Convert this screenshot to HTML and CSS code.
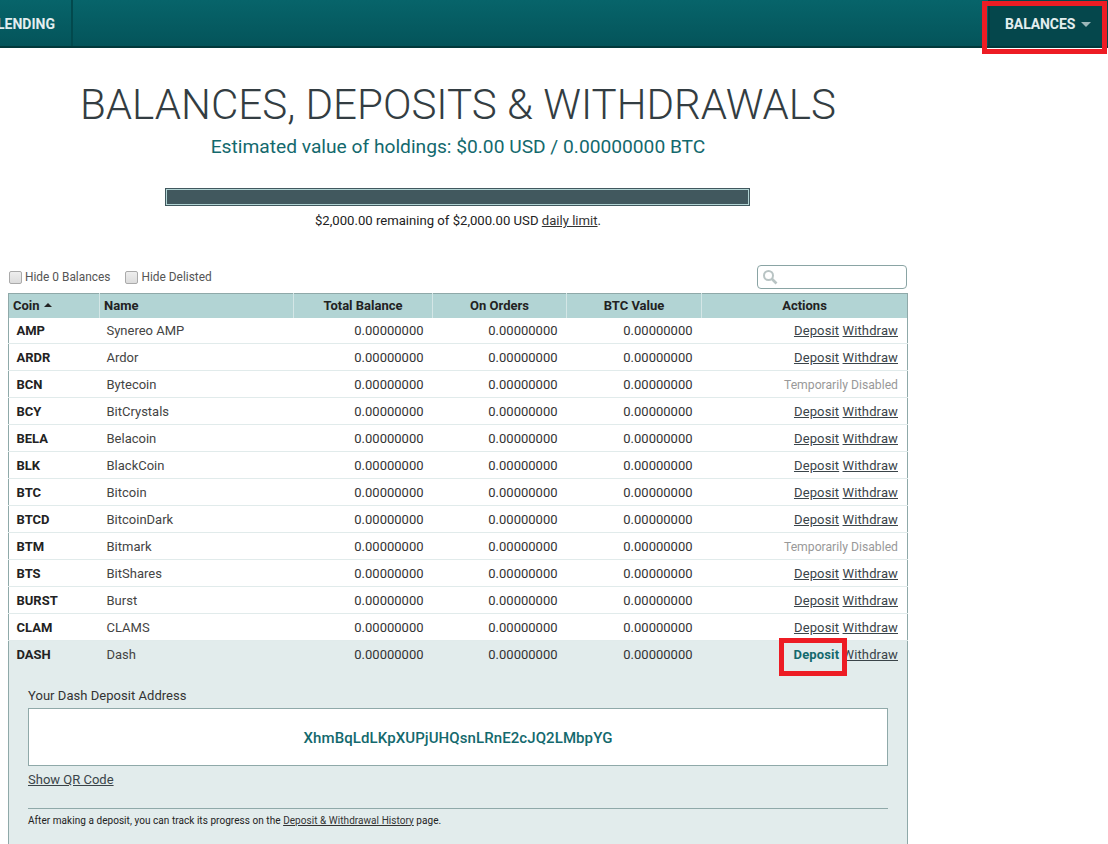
FILE: index.html
```html
<!DOCTYPE html>
<html lang="en">
<head>
<meta charset="utf-8">
<title>Balances</title>
<link rel="stylesheet" href="styles.css">
</head>
<body>
<nav class="nav">
  <div class="nav-left"><a class="nav-item">LENDING</a></div>
  <div class="nav-right"><a class="nav-item">BALANCES<span class="caret"></span></a><span class="mark mark-nav"></span></div>
</nav>
<main class="main">
  <header class="head">
    <h1>BALANCES, DEPOSITS &amp; WITHDRAWALS</h1>
    <p class="estimate">Estimated value of holdings: $0.00 USD / 0.00000000 BTC</p>
    <div class="limit-bar"></div>
    <p class="limit-text">$2,000.00 remaining of $2,000.00 USD <a>daily limit</a>.</p>
  </header>
  <div class="tools">
    <label class="check"><span class="box"></span>Hide 0 Balances</label>
    <label class="check"><span class="box"></span>Hide Delisted</label>
    <div class="search">
      <svg width="16" height="16" viewBox="0 0 16 16" fill="none" stroke="#b9c4c4"><circle cx="6.5" cy="6.5" r="4.5" stroke-width="2"/><path d="M10 10l4.5 4.5" stroke-width="2.6"/></svg>
    </div>
  </div>
  <table class="coins">
    <colgroup><col class="c1"><col class="c2"><col class="c3"><col class="c4"><col class="c5"><col class="c6"></colgroup>
    <thead>
      <tr><th class="left">Coin<span class="sort"></span></th><th class="left">Name</th><th>Total Balance</th><th>On Orders</th><th>BTC Value</th><th>Actions</th></tr>
    </thead>
    <tbody>
      <tr><td class="sym">AMP</td><td>Synereo AMP</td><td class="num">0.00000000</td><td class="num">0.00000000</td><td class="num">0.00000000</td><td class="act"><a>Deposit</a> <a>Withdraw</a></td></tr>
      <tr><td class="sym">ARDR</td><td>Ardor</td><td class="num">0.00000000</td><td class="num">0.00000000</td><td class="num">0.00000000</td><td class="act"><a>Deposit</a> <a>Withdraw</a></td></tr>
      <tr><td class="sym">BCN</td><td>Bytecoin</td><td class="num">0.00000000</td><td class="num">0.00000000</td><td class="num">0.00000000</td><td class="act off">Temporarily Disabled</td></tr>
      <tr><td class="sym">BCY</td><td>BitCrystals</td><td class="num">0.00000000</td><td class="num">0.00000000</td><td class="num">0.00000000</td><td class="act"><a>Deposit</a> <a>Withdraw</a></td></tr>
      <tr><td class="sym">BELA</td><td>Belacoin</td><td class="num">0.00000000</td><td class="num">0.00000000</td><td class="num">0.00000000</td><td class="act"><a>Deposit</a> <a>Withdraw</a></td></tr>
      <tr><td class="sym">BLK</td><td>BlackCoin</td><td class="num">0.00000000</td><td class="num">0.00000000</td><td class="num">0.00000000</td><td class="act"><a>Deposit</a> <a>Withdraw</a></td></tr>
      <tr><td class="sym">BTC</td><td>Bitcoin</td><td class="num">0.00000000</td><td class="num">0.00000000</td><td class="num">0.00000000</td><td class="act"><a>Deposit</a> <a>Withdraw</a></td></tr>
      <tr><td class="sym">BTCD</td><td>BitcoinDark</td><td class="num">0.00000000</td><td class="num">0.00000000</td><td class="num">0.00000000</td><td class="act"><a>Deposit</a> <a>Withdraw</a></td></tr>
      <tr><td class="sym">BTM</td><td>Bitmark</td><td class="num">0.00000000</td><td class="num">0.00000000</td><td class="num">0.00000000</td><td class="act off">Temporarily Disabled</td></tr>
      <tr><td class="sym">BTS</td><td>BitShares</td><td class="num">0.00000000</td><td class="num">0.00000000</td><td class="num">0.00000000</td><td class="act"><a>Deposit</a> <a>Withdraw</a></td></tr>
      <tr><td class="sym">BURST</td><td>Burst</td><td class="num">0.00000000</td><td class="num">0.00000000</td><td class="num">0.00000000</td><td class="act"><a>Deposit</a> <a>Withdraw</a></td></tr>
      <tr><td class="sym">CLAM</td><td>CLAMS</td><td class="num">0.00000000</td><td class="num">0.00000000</td><td class="num">0.00000000</td><td class="act"><a>Deposit</a> <a>Withdraw</a></td></tr>
      <tr class="open"><td class="sym">DASH</td><td>Dash</td><td class="num">0.00000000</td><td class="num">0.00000000</td><td class="num">0.00000000</td><td class="act"><span class="dep-wrap"><a class="current">Deposit</a><span class="mark mark-dep"></span></span> <a>Withdraw</a></td></tr>
      <tr class="panel-row"><td colspan="6">
        <div class="panel">
          <div class="panel-label">Your Dash Deposit Address</div>
          <div class="address">XhmBqLdLKpXUPjUHQsnLRnE2cJQ2LMbpYG</div>
          <a class="qr">Show QR Code</a>
          <p class="note">After making a deposit, you can track its progress on the <a>Deposit &amp; Withdrawal History</a> page.</p>
        </div>
      </td></tr>
    </tbody>
  </table>
</main>
</body>
</html>
```
FILE: styles.css
```css
* { box-sizing: border-box; }
html, body { margin: 0; height: 844px; overflow: hidden; background: #fff; }
body { font-family: Roboto, "Liberation Sans", sans-serif; color: #333; font-size: 13px; }
a { color: #3a4449; text-decoration: underline; }

.nav { height: 48px; display: flex; justify-content: space-between; background: linear-gradient(#07646a, #04545a); border-bottom: 2px solid #02393b; }
.nav-left { width: 73px; display: flex; justify-content: flex-end; border-right: 2px solid #02494d; }
.nav-item { color: #e3eeef; font-weight: 700; font-size: 14px; text-decoration: none; line-height: 49px; }
.nav-left .nav-item { padding-right: 16px; }
.nav-right { position: relative; width: 120px; background: #05474c; border-left: 2px solid #033c40; padding-left: 15px; letter-spacing: -0.1px; }
.caret { display: inline-block; margin-left: 6px; vertical-align: 2px; border: 5px solid transparent; border-top-color: #9db8ba; border-bottom-width: 0; }

.mark { position: absolute; border: 5px solid #ed1c24; pointer-events: none; }
.mark-nav { left: -8px; top: 1px; width: 125px; height: 53px; z-index: 3; }
.dep-wrap { position: relative; display: inline-block; }
.mark-dep { left: -15px; top: -9px; width: 68px; height: 38px; }

.main { width: 908px; padding-left: 8px; }
.head { text-align: center; }
h1 { margin: 0; padding-top: 32px; font-size: 42.1px; font-weight: 300; line-height: 50px; color: #333d42; }
.estimate { margin: 5px 0 0; font-size: 19.2px; line-height: 24px; color: #13696d; }
.limit-bar { width: 585px; height: 18px; margin: 29px 0 0 157px; background: #41585e; border: 1px solid #41585e; box-shadow: inset 0 0 0 1px #b2d4d4; }
.limit-text { margin: 5px 0 0; line-height: 20px; color: #222; font-size: 13.14px; }
.limit-text a { color: #333; }

.tools { display: flex; align-items: center; height: 26px; margin-top: 33px; padding: 0 1px; color: #555; font-size: 11.9px; }
.check { display: flex; align-items: center; margin-right: 15px; }
.box { width: 13px; height: 13px; margin-right: 3px; background: linear-gradient(#eee, #dcdcdc); border: 1px solid #aaa; border-radius: 2px; }
.search { margin-left: auto; width: 150px; height: 24px; border: 1px solid #8aa4a4; border-radius: 4px; padding: 3px 4px; }
.search svg { display: block; }

.coins { width: 900px; margin-top: 3px; table-layout: fixed; border-collapse: collapse; border-left: 1px solid #8fa9a9; border-right: 1px solid #8fa9a9; border-top: 1px solid #8fa9a9; }
.c1 { width: 91px; } .c2 { width: 194px; } .c3 { width: 139px; } .c4 { width: 134px; } .c5 { width: 135px; } .c6 { width: auto; }
th { height: 24px; padding: 0; background: #b2d4d4; font-size: 13px; font-weight: 700; text-align: center; color: #222; border-right: 1px solid #d4e6e6; }
th:last-child { border-right: 0; }
th.left { text-align: left; padding-left: 4px; }
.sort { display: inline-block; margin-left: 4px; vertical-align: 3px; border: 4px solid transparent; border-bottom-color: #222; border-top-width: 0; }
td { height: 27px; padding: 0 0 0 7px; border-bottom: 1px solid #e1ebeb; color: #444; white-space: nowrap; }
tbody tr:first-child td { height: 26px; }
.sym { padding-left: 7.5px; font-weight: 700; color: #222; }
.num { text-align: right; padding: 0 9px 0 0; color: #333; }
.act { text-align: right; padding: 0 9px 0 0; letter-spacing: 0.13px; }
.off { color: #999; font-size: 12.2px; letter-spacing: 0; padding-top: 1px; }
.open td { background: #e2ecec; border-bottom: 0; }
.current { font-weight: 700; color: #13696d; text-decoration: none; }

.panel-row td { padding: 0; background: #e2ecec; border-bottom: 0; height: 190px; white-space: normal; vertical-align: top; }
.panel { padding: 19px 19px 0; }
.panel-label { line-height: 18px; color: #333; letter-spacing: 0.04px; }
.address { height: 58px; margin-top: 3px; line-height: 58px; text-align: center; font-size: 15px; font-weight: 500; letter-spacing: 0.09px; color: #13696d; background: #fff; border: 1px solid #8fa9a9; }
.qr { display: block; margin-top: 5px; line-height: 17px; }
.note { margin: 20px 0 0; padding-top: 5px; border-top: 1px solid #8fa9a9; font-size: 10px; line-height: 14px; color: #222; letter-spacing: 0.05px; }
.note a { color: #333; }
```
